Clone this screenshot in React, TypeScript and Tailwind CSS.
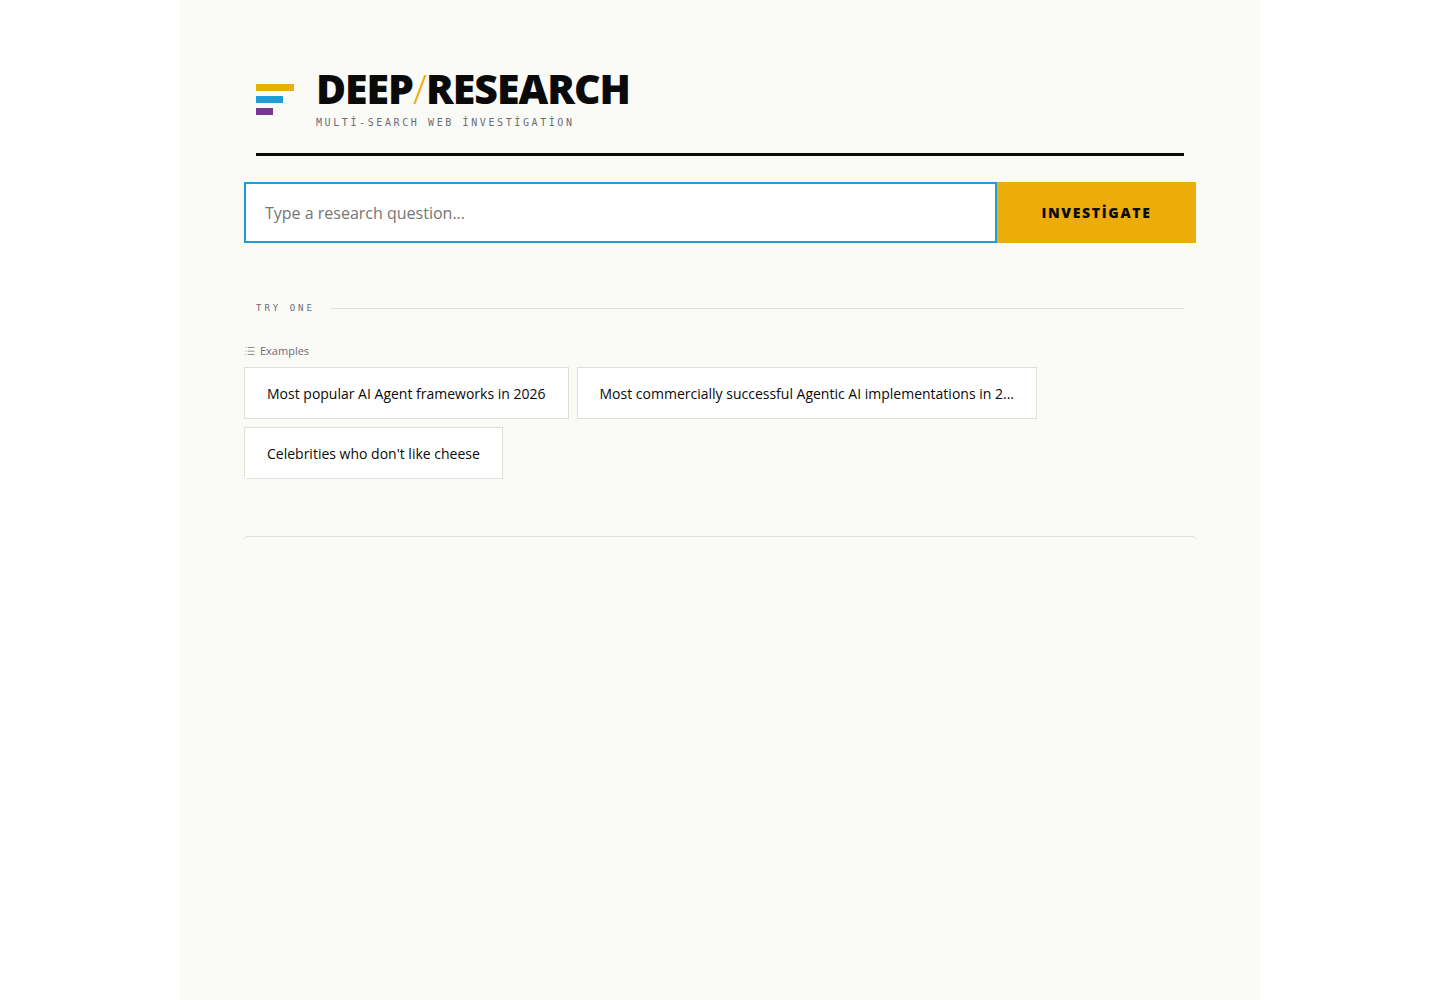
import React, { useState, FormEvent } from 'react';

const EXAMPLES = [
  {
    label: 'Most popular AI Agent frameworks in 2026',
    question: 'Most popular AI Agent frameworks in 2026',
  },
  {
    label: 'Most commercially successful Agentic AI implementations in 2...',
    question: 'Most commercially successful Agentic AI implementations in 2026',
  },
  {
    label: "Celebrities who don't like cheese",
    question: "Celebrities who don't like cheese",
  },
];

function Logo() {
  return (
    <div className="flex flex-col gap-[5px] w-[38px] shrink-0" aria-hidden="true">
      <span className="h-[7px] w-[38px] bg-[#ecad0a]" />
      <span className="h-[7px] w-[27px] bg-[#209dd7]" />
      <span className="h-[7px] w-[17px] bg-[#753991]" />
    </div>
  );
}

function Header() {
  return (
    <header className="mx-3 flex items-center gap-[22px] border-b-[3px] border-[#0a0a0a] pb-[21px]">
      <Logo />
      <div>
        <h1 className="text-[41px] leading-[42px] font-extrabold tracking-[-1px] text-[#0a0a0a]">
          DEEP<span className="font-light text-[#ecad0a]">/</span>RESEARCH
        </h1>
        <p className="mt-1 font-['DejaVu_Sans_Mono',monospace] text-[10px] leading-[19px] tracking-[0.26em] text-[#6b6b76]">
          MULTİ-SEARCH WEB İNVESTİGATİON
        </p>
      </div>
    </header>
  );
}

function ListIcon() {
  return (
    <svg className="w-3 h-3" viewBox="0 0 32 32" fill="currentColor" aria-hidden="true">
      <path d="M10 6h18v2H10zm0 18h18v2H10zm0-9h18v2H10zm-6 0h2v2H4zm0-9h2v2H4zm0 18h2v2H4z" />
    </svg>
  );
}

export default function App() {
  const [query, setQuery] = useState<string>('');

  const handleSubmit = (e: FormEvent<HTMLFormElement>) => {
    e.preventDefault();
    if (!query.trim()) return;
    setQuery('');
  };

  return (
    <div className="min-h-screen bg-white font-['Open_Sans','Noto_Sans',sans-serif]">
      <main className="mx-auto min-h-screen max-w-[1080px] bg-[#fafbf7] px-16 pt-[67px]">
        <Header />

        <form onSubmit={handleSubmit} className="mt-[26px] flex items-stretch">
          <input
            type="text"
            aria-label="Research question"
            value={query}
            onChange={(e) => setQuery(e.target.value)}
            placeholder="Type a research question..."
            className="h-[61px] min-w-0 flex-1 border-2 border-[#209dd7] bg-white px-[19px] text-base text-[#0a0a0a] placeholder-[#757575] focus:outline-none"
          />
          <button
            type="submit"
            className="w-[199px] shrink-0 cursor-pointer bg-[#ecad0a] text-sm font-extrabold tracking-[0.12em] text-[#0a0a0a]"
          >
            INVESTİGATE
          </button>
        </form>

        <div className="mx-3 mt-[58px] flex items-center gap-4">
          <h2 className="font-['DejaVu_Sans_Mono',monospace] text-[9px] leading-[14px] tracking-[3px] text-[#6b6b76]">
            TRY ONE
          </h2>
          <span className="h-px flex-1 bg-[#e0e0d8]" />
        </div>

        <section className="mt-7 overflow-hidden rounded-[4px]">
          <div className="mb-2 flex items-center gap-1 text-[11px] leading-4 text-[#6b6b76]">
            <ListIcon />
            <span>Examples</span>
          </div>
          <div className="flex flex-wrap gap-2">
            {EXAMPLES.map((example) => (
              <button
                key={example.label}
                type="button"
                onClick={() => setQuery(example.question)}
                className="cursor-pointer border border-[#e0e0d8] bg-white px-[22px] pt-4 pb-[14px] text-sm leading-5 text-[#0a0a0a] hover:border-[#209dd7]"
              >
                {example.label}
              </button>
            ))}
          </div>
        </section>

        <section aria-label="Report" className="mt-[57px] h-3 rounded-[4px] border-t border-[#e0e0d8]" />
      </main>
    </div>
  );
}
